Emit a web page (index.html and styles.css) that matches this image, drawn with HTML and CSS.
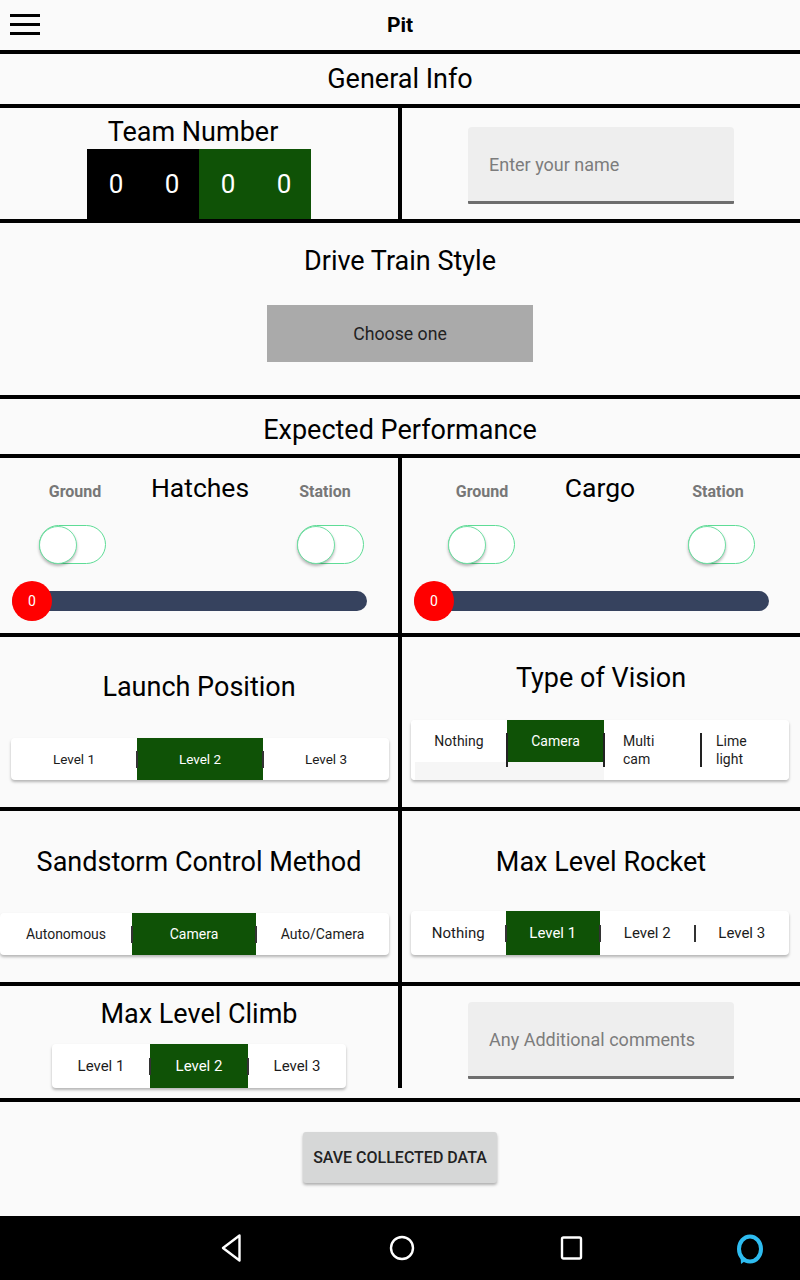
FILE: index.html
```html
<!DOCTYPE html>
<html>
<head>
<meta charset="utf-8">
<title>Pit</title>
<link rel="stylesheet" href="styles.css">
</head>
<body>
<header class="topbar">
  <div class="menu"><span></span><span></span><span></span></div>
  <div class="title">Pit</div>
  <div></div>
</header>

<section class="heading">General Info</section>

<section class="split team-row">
  <div class="cell team-cell">
    <div class="label team-label">Team Number</div>
    <div class="digits">
      <span class="d dark">0</span><span class="d dark">0</span><span class="d green">0</span><span class="d green">0</span>
    </div>
  </div>
  <div class="cell name-cell">
    <div class="input">Enter your name</div>
  </div>
</section>

<section class="full drive">
  <div class="label">Drive Train Style</div>
  <div class="choose">Choose one</div>
</section>

<section class="heading heading-low">Expected Performance</section>

<section class="split perf-row">
  <div class="cell game hatch">
    <div class="hrow"><span class="lbl">Ground</span><span class="htitle">Hatches</span><span class="lbl">Station</span></div>
    <div class="toggles"><span class="tog"><span class="knob"></span></span><span class="tog"><span class="knob"></span></span></div>
    <div class="slider"><span class="thumb">0</span></div>
  </div>
  <div class="cell game cargo">
    <div class="hrow"><span class="lbl">Ground</span><span class="htitle">Cargo</span><span class="lbl">Station</span></div>
    <div class="toggles"><span class="tog"><span class="knob"></span></span><span class="tog"><span class="knob"></span></span></div>
    <div class="slider"><span class="thumb">0</span></div>
  </div>
</section>

<section class="split launch-row">
  <div class="cell launch">
    <div class="label">Launch Position</div>
    <div class="seg seg-launch">
      <div class="opt">Level 1</div>
      <span class="sep"></span>
      <div class="opt on">Level 2</div>
      <span class="sep"></span>
      <div class="opt">Level 3</div>
    </div>
  </div>
  <div class="cell vision">
    <div class="label">Type of Vision</div>
    <div class="seg seg-vision">
      <div class="opt top v1">Nothing</div>
      <span class="sep tall"></span>
      <div class="opt top on v2">Camera</div>
      <span class="sep tall"></span>
      <div class="opt left v3">Multi<br>cam</div>
      <span class="sep tall"></span>
      <div class="opt left v4">Lime<br>light</div>
    </div>
  </div>
</section>

<section class="split sand-row">
  <div class="cell sand">
    <div class="label">Sandstorm Control Method</div>
    <div class="seg seg-sand">
      <div class="opt s1">Autonomous</div>
      <span class="sep"></span>
      <div class="opt on s2">Camera</div>
      <span class="sep"></span>
      <div class="opt s3">Auto/Camera</div>
    </div>
  </div>
  <div class="cell rocket">
    <div class="label">Max Level Rocket</div>
    <div class="seg seg-rocket">
      <div class="opt">Nothing</div>
      <span class="sep"></span>
      <div class="opt on">Level 1</div>
      <span class="sep"></span>
      <div class="opt">Level 2</div>
      <span class="sep"></span>
      <div class="opt">Level 3</div>
    </div>
  </div>
</section>

<section class="split climb-row">
  <div class="cell climb">
    <div class="label">Max Level Climb</div>
    <div class="seg seg-climb">
      <div class="opt">Level 1</div>
      <span class="sep"></span>
      <div class="opt on">Level 2</div>
      <span class="sep"></span>
      <div class="opt">Level 3</div>
    </div>
  </div>
  <div class="cell comments-cell">
    <div class="input comments">Any Additional comments</div>
  </div>
</section>

<section class="save-area">
  <div class="save-btn">SAVE COLLECTED DATA</div>
</section>

<nav class="navbar">
  <svg class="nav-back" width="22" height="30" viewBox="0 0 22 30"><path d="M19.5 2.5 L3 15 L19.5 27.5 Z" fill="none" stroke="#fff" stroke-width="2.4" stroke-linejoin="round"/></svg>
  <svg class="nav-home" width="26" height="26" viewBox="0 0 26 26"><circle cx="13" cy="13" r="11" fill="none" stroke="#fff" stroke-width="2.4"/></svg>
  <svg class="nav-recent" width="24" height="24" viewBox="0 0 24 24"><rect x="2" y="1.5" width="19" height="21" rx="1.5" fill="none" stroke="#fff" stroke-width="2.4"/></svg>
  <svg class="nav-alexa" width="30" height="32" viewBox="0 0 30 32"><ellipse cx="15" cy="15" rx="11" ry="12.5" fill="none" stroke="#2ebcf0" stroke-width="4"/><path d="M5.5 22 L6 30 L11.5 26 Z" fill="#2ebcf0"/></svg>
</nav>
</body>
</html>
```

FILE: styles.css
```css
* { box-sizing: border-box; margin: 0; padding: 0; }

html, body { width: 800px; height: 1280px; overflow: hidden; }

body {
  font-family: Roboto, "Noto Sans", "Liberation Sans", sans-serif;
  background: #fafafa;
  color: #000;
  display: flex;
  flex-direction: column;
}

/* top bar */
.topbar {
  height: 54px;
  border-bottom: 4px solid #000;
  display: grid;
  grid-template-columns: 1fr auto 1fr;
  align-items: center;
  background: #fafafa;
}
.menu {
  width: 30px;
  margin-left: 10px;
  display: flex;
  flex-direction: column;
  gap: 6px;
  margin-top: -1px;
}
.menu span { height: 3px; background: #000; }
.title { font-size: 21px; font-weight: 700; }

/* headings */
.heading {
  height: 54px;
  border-bottom: 4px solid #000;
  display: flex;
  align-items: center;
  justify-content: center;
  font-size: 27px;
}
.heading-low { height: 59px; padding-top: 6px; }

.label { font-size: 27px; line-height: 30px; text-align: center; }
.team-label { margin-right: 12px; }

/* two column rows */
.split {
  display: grid;
  grid-template-columns: 402px 398px;
  border-bottom: 4px solid #000;
}
.split > .cell:first-child { border-right: 4px solid #000; }
.cell { display: flex; flex-direction: column; align-items: center; }

.team-row { height: 115px; }
.team-cell { padding-top: 9px; }
.digits { display: flex; margin-top: 2px; }
.d {
  width: 56px;
  height: 70px;
  display: flex;
  align-items: center;
  justify-content: center;
  color: #fff;
  font-size: 26px;
  padding-left: 2px;
}
.d.dark { background: #000; }
.d.green { background: #0f5206; }

.name-cell { padding-top: 19px; }
.input {
  width: 266px;
  height: 77px;
  background: #eeeeee;
  border-radius: 4px 4px 1px 1px;
  border-bottom: 3px solid #6e6e6e;
  display: flex;
  align-items: center;
  padding-left: 21px;
  font-size: 18px;
  color: #7c7c7c;
}

/* drive train */
.full {
  border-bottom: 4px solid #000;
  display: flex;
  flex-direction: column;
  align-items: center;
}
.drive { height: 176px; padding-top: 23px; }
.choose {
  margin-top: 29px;
  width: 266px;
  height: 57px;
  background: #aaaaaa;
  display: flex;
  align-items: center;
  justify-content: center;
  font-size: 17.7px;
  color: #222;
}

/* performance */
.perf-row { height: 179px; }
.game { align-items: stretch; padding-top: 15px; }
.hrow { display: grid; align-items: baseline; text-align: center; }
.hatch .hrow { grid-template-columns: 150px 100px 150px; }
.cargo .hrow { grid-template-columns: 160px 76px 160px; }
.htitle { font-size: 26.5px; line-height: 30px; }
.lbl { font-size: 16px; font-weight: 700; color: #777; }

.toggles { display: flex; justify-content: space-between; margin-top: 22px; }
.hatch .toggles { padding: 0 34px 0 39px; }
.cargo .toggles { padding: 0 45px 0 46px; }
.tog {
  width: 67px;
  height: 39px;
  border: 1.5px solid #5edc96;
  border-radius: 20px;
  background: #fff;
  display: flex;
  align-items: center;
}
.knob {
  width: 38px;
  height: 38px;
  margin-left: -1.5px;
  border-radius: 50%;
  background: #fff;
  border: 1px solid #6fe0a3;
  box-shadow: 0 2px 3px rgba(0, 0, 0, 0.28);
}

.slider {
  height: 20px;
  margin: 27px 31px 0 12px;
  background: #36425e;
  border-radius: 10px;
  display: flex;
  align-items: center;
}
.thumb {
  width: 40px;
  height: 40px;
  margin: -10px 0;
  border-radius: 50%;
  background: #ff0000;
  color: #fff;
  font-size: 14px;
  display: flex;
  align-items: center;
  justify-content: center;
  flex-shrink: 0;
}

/* segmented controls */
.seg {
  display: flex;
  height: 42px;
  background: #fff;
  border-radius: 4px;
  box-shadow: 0 2px 3px rgba(0, 0, 0, 0.28);
  overflow: hidden;
}
.opt {
  flex: 1;
  display: flex;
  align-items: center;
  justify-content: center;
  font-size: 14px;
  color: #1c1c1c;
}
.opt.on { background: #0f5206; color: #fff; }
.sep {
  width: 2px;
  height: 17px;
  margin: 0 -1px;
  align-self: center;
  background: #333;
  position: relative;
  z-index: 1;
}
.sep.tall { width: 1.5px; height: 34px; margin: 0 -0.75px; background: #222; }

.launch-row { height: 174px; }
.launch { padding-top: 35px; }
.seg-launch { width: 378px; margin: 36px 9px 0 11px; align-self: flex-start; }
.seg-launch .opt { font-size: 13.5px; }

.vision { padding-top: 26px; }
.seg-vision {
  width: 378px;
  height: 60px;
  margin-top: 27px;
  align-self: flex-start;
  margin-left: 9px;
  background: linear-gradient(to right, #fff 0 4px, #f6f6f6 4px 193px, #fff 193px);
}
.opt.top { align-self: flex-start; height: 42px; background: #fff; }
.opt.top.on { background: #0f5206; }
.opt.left { justify-content: flex-start; line-height: 18px; }
.v1 { flex: 0 0 96px; }
.v2 { flex: 0 0 97px; }
.v3 { flex: 0 0 97px; padding-left: 19px; }
.v4 { flex: 0 0 88px; padding-left: 15px; }

.sand-row { height: 175px; }
.sand { padding-top: 36px; }
.seg-sand { width: 389px; margin-top: 36px; align-self: flex-start; }
.s1 { flex: 0 0 132px; }
.s2 { flex: 0 0 124px; }
.s3 { flex: 0 0 133px; }
.rocket { padding-top: 36px; }
.seg-rocket { width: 378px; height: 44px; margin-top: 34px; align-self: flex-start; margin-left: 9px; }
.seg-rocket .opt { font-size: 15px; }

.climb-row { height: 116px; padding-bottom: 10px; }
.climb { padding-top: 13px; }
.seg-climb { width: 294px; height: 44px; margin-top: 15px; }
.seg-climb .opt { font-size: 15px; }
.comments-cell { padding-top: 16px; }

/* save */
.save-area { height: 114px; display: flex; justify-content: center; padding-top: 30px; }
.save-btn {
  width: 194px;
  height: 51px;
  background: #d6d7d7;
  border-radius: 3px;
  box-shadow: 0 2px 3px rgba(0, 0, 0, 0.3);
  display: flex;
  align-items: center;
  justify-content: center;
  font-size: 16px;
  font-weight: 500;
  color: #222;
}

/* nav */
.navbar {
  height: 64px;
  background: #000;
  display: flex;
  align-items: center;
  padding-left: 220px;
  padding-right: 35px;
}
.nav-home { margin-left: 147px; }
.nav-recent { margin-left: 145px; }
.nav-alexa { margin-left: auto; margin-top: 3px; }
```
